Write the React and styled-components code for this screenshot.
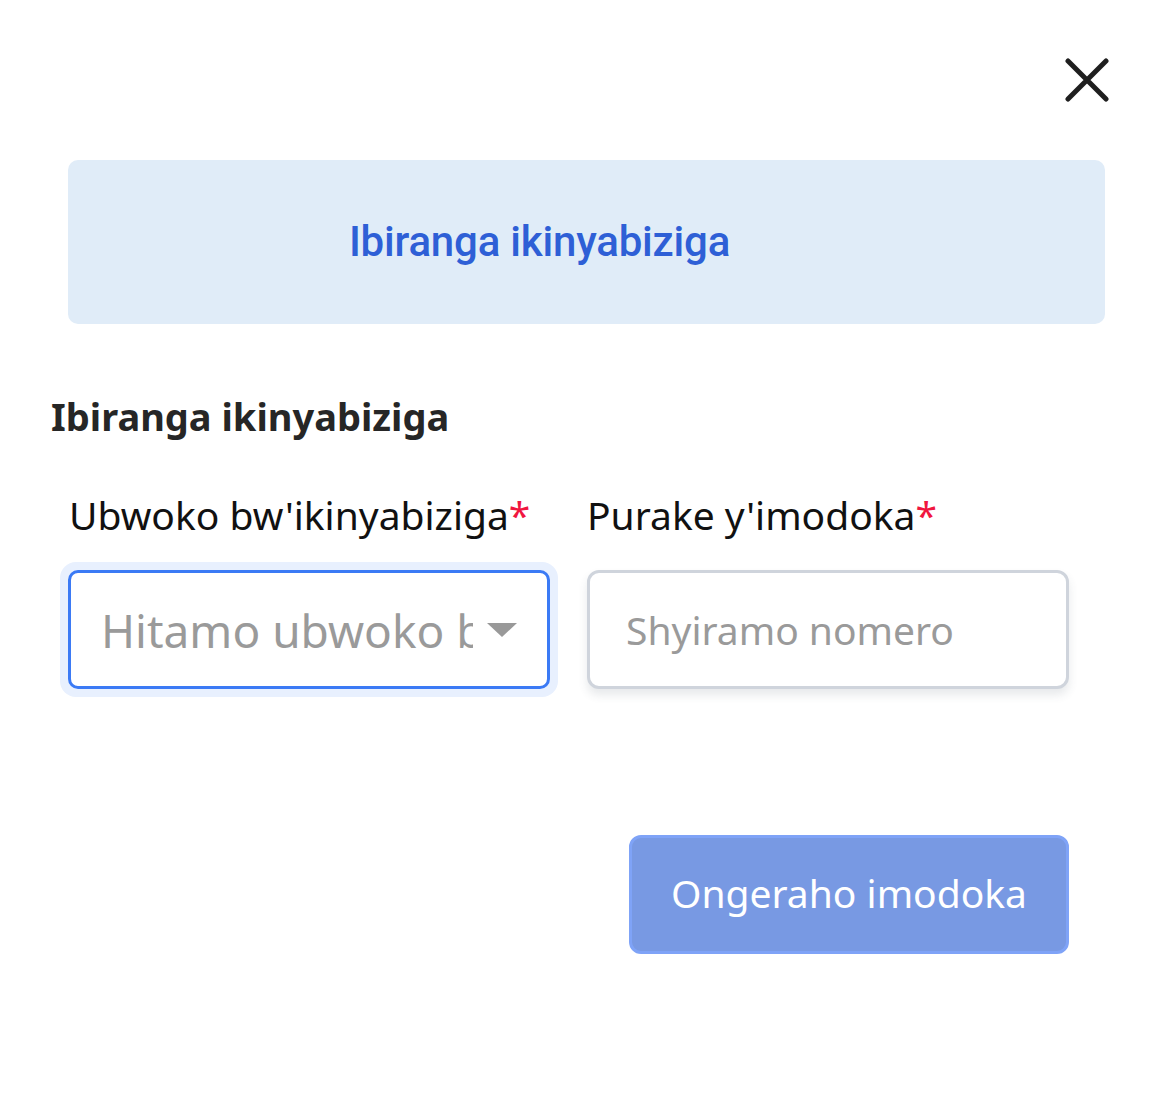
import React from "react";
import styled, { createGlobalStyle } from "styled-components";

const Global = createGlobalStyle`
  html, body { margin: 0; padding: 0; background: #fff; }
  body { font-family: "Noto Sans", "Open Sans", sans-serif; color: #1f1f1f; }
  * { box-sizing: border-box; }
`;

const Page = styled.div`
  width: 1167px;
  min-height: 1104px;
  padding: 56px 0 0 0;
  display: flex;
  flex-direction: column;
`;

const TopBar = styled.div`
  display: flex;
  justify-content: flex-end;
  padding-right: 56px;
  height: 48px;
`;

const CloseButton = styled.button`
  width: 48px;
  height: 48px;
  padding: 0;
  border: none;
  background: transparent;
  display: flex;
  align-items: center;
  justify-content: center;
  cursor: pointer;
`;

const Banner = styled.div`
  margin: 56px 62px 0 68px;
  height: 164px;
  border-radius: 10px;
  background: #e0ecf8;
  display: flex;
  align-items: center;
  justify-content: center;
  padding-right: 94px;
`;

const BannerTitle = styled.h2`
  margin: 0 0 2px 0;
  font-family: Roboto, "Noto Sans", sans-serif;
  font-weight: 500;
  font-size: 42px;
  color: #2e5fd6;
  letter-spacing: -0.2px;
`;

const SectionTitle = styled.h3`
  margin: 68px 0 0 51px;
  font-size: 38px;
  line-height: 48px;
  font-weight: 700;
  color: #262626;
`;

const FieldsRow = styled.div`
  display: flex;
  margin: 51px 0 0 60px;
  gap: 29px;
`;

const Field = styled.div`
  display: flex;
  flex-direction: column;
  width: ${(p) => p.$width}px;
`;

const Label = styled.label`
  font-size: 39px;
  line-height: 48px;
  color: #111;
  padding-left: ${(p) => p.$indent}px;
  white-space: nowrap;
`;

const Required = styled.span`
  color: #f0163f;
`;

const Halo = styled.div`
  margin-top: 23px;
  padding: 8px;
  border-radius: 16px;
  background: ${(p) => (p.$focused ? "#e8f0fe" : "transparent")};
`;

const SelectBox = styled.div`
  height: 119px;
  border: 3px solid #3b7af5;
  border-radius: 10px;
  background: #fff;
  display: flex;
  align-items: center;
  padding: 0 30px 0 30px;
  gap: 14px;
`;

const SelectText = styled.span`
  flex: 1;
  overflow: hidden;
  white-space: nowrap;
  font-size: 46px;
  color: #9a9a9a;
`;

const InputBox = styled.div`
  margin-top: 31px;
  height: 119px;
  border: 3px solid #cfd4dc;
  border-radius: 12px;
  background: #fff;
  box-shadow: 0 6px 10px rgba(60, 70, 90, 0.12);
  display: flex;
  align-items: center;
  padding: 0 36px;
`;

const Placeholder = styled.span`
  font-size: 39px;
  color: #9a9a9a;
  white-space: nowrap;
`;

const Actions = styled.div`
  display: flex;
  justify-content: flex-end;
  margin: 138px 98px 0 0;
`;

const PrimaryButton = styled.button`
  width: 440px;
  height: 119px;
  border: 3px solid #7fa3f7;
  border-radius: 12px;
  background: #7899e3;
  color: #fff;
  font-family: "Noto Sans", "Open Sans", sans-serif;
  font-size: 39px;
  cursor: pointer;
  padding: 0 0 4px 0;
`;

export default function App() {
  return (
    <>
      <Global />
      <Page>
        <TopBar>
          <CloseButton aria-label="close">
            <svg width="44" height="44" viewBox="0 0 44 44">
              <path d="M3 3 L41 41 M41 3 L3 41" stroke="#1f1f1f" strokeWidth="5" strokeLinecap="round" />
            </svg>
          </CloseButton>
        </TopBar>
        <Banner>
          <BannerTitle>Ibiranga ikinyabiziga</BannerTitle>
        </Banner>
        <SectionTitle>Ibiranga ikinyabiziga</SectionTitle>
        <FieldsRow>
          <Field $width={498}>
            <Label $indent={9}>
              Ubwoko bw'ikinyabiziga<Required>*</Required>
            </Label>
            <Halo $focused>
              <SelectBox>
                <SelectText>Hitamo ubwoko bw'ikinyabiziga</SelectText>
                <svg width="30" height="14" viewBox="0 0 30 14">
                  <path d="M0 0 H30 L15 14 Z" fill="#999" />
                </svg>
              </SelectBox>
            </Halo>
          </Field>
          <Field $width={482}>
            <Label $indent={0}>
              Purake y'imodoka<Required>*</Required>
            </Label>
            <InputBox>
              <Placeholder>Shyiramo nomero</Placeholder>
            </InputBox>
          </Field>
        </FieldsRow>
        <Actions>
          <PrimaryButton>Ongeraho imodoka</PrimaryButton>
        </Actions>
      </Page>
    </>
  );
}
